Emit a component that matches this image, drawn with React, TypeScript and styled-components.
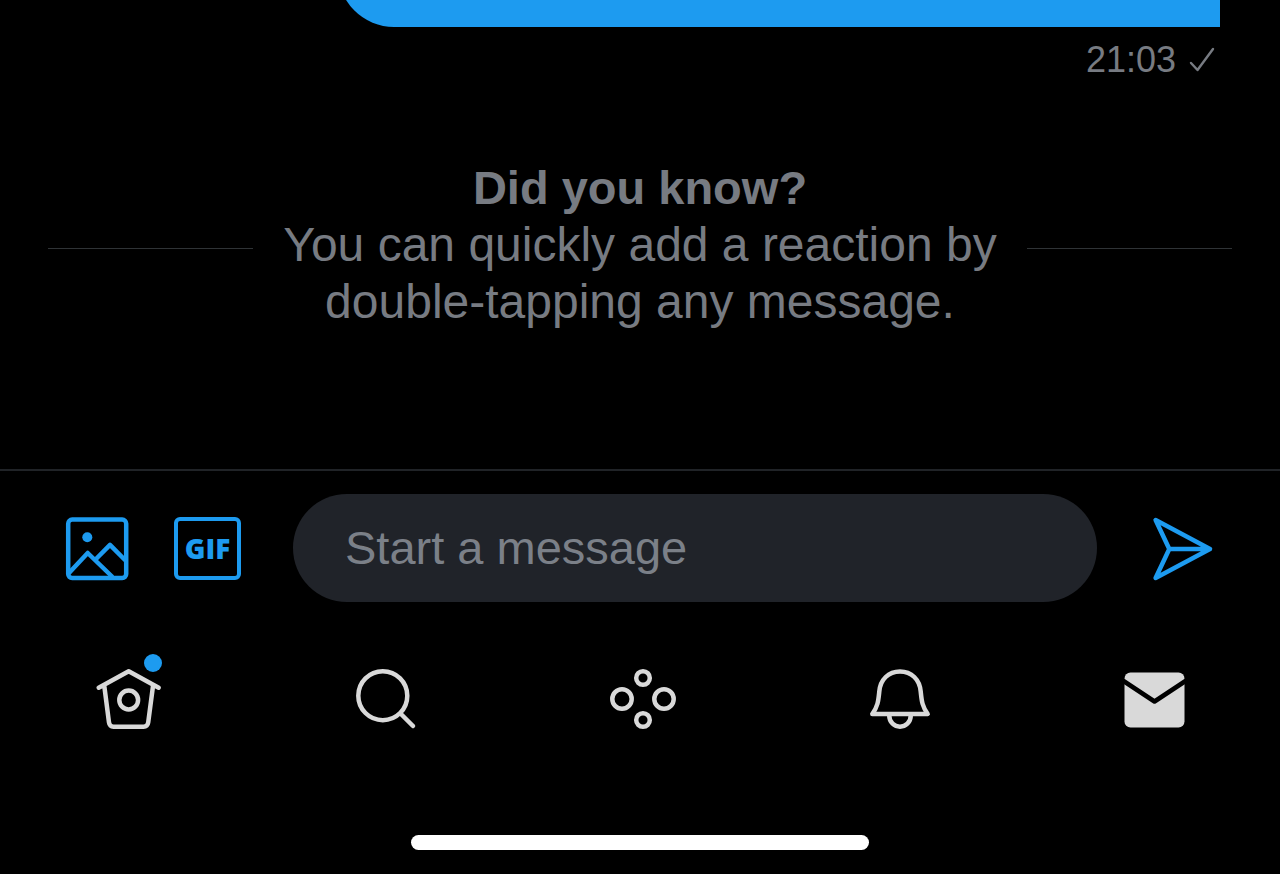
import React from 'react';
import styled, { createGlobalStyle } from 'styled-components';

const blue = '#1d9bf0';
const grey = '#777b82';
const line = '#2f3336';
const light = '#d9d9d9';

const GlobalStyle = createGlobalStyle`
  *, *::before, *::after { box-sizing: border-box; }
  body {
    margin: 0;
    background: #000;
    font-family: "Liberation Sans", Arial, sans-serif;
  }
  button { font: inherit; }
`;

const Screen = styled.div`
  display: flex;
  flex-direction: column;
  min-height: 100vh;
  background: #000;
`;

const Conversation = styled.main`
  display: flex;
  flex-direction: column;
  flex: 1;
  padding: 0 48px;
`;

const BubbleClip = styled.div`
  display: flex;
  align-items: flex-end;
  height: 27px;
  padding: 0 12px 0 290px;
  overflow: hidden;
`;

const Bubble = styled.div`
  flex: 1;
  height: 112px;
  border-radius: 56px 56px 0 56px;
  background: ${blue};
`;

const Meta = styled.div`
  display: flex;
  align-items: center;
  justify-content: flex-end;
  gap: 12px;
  margin-top: 11px;
  padding-right: 16px;
  color: ${grey};
  font-size: 36px;
  line-height: 44px;
`;

const Tip = styled.section`
  display: flex;
  align-items: center;
  gap: 30px;
  margin-top: 77px;
  color: ${grey};
  font-size: 48px;
  line-height: 57px;
  text-align: center;

  &::before, &::after {
    content: "";
    flex: 1;
    height: 1px;
    background: ${line};
  }
`;

const TipBody = styled.div`
  padding-bottom: 8px;
`;

const TipTitle = styled.h2`
  margin: 0;
  font-size: 47px;
  font-weight: 700;
`;

const TipText = styled.p`
  margin: 0;
`;

const Composer = styled.form`
  display: flex;
  align-items: center;
  padding: 23px 66px 24px 65px;
  border-top: 2px solid #202327;
`;

const Tools = styled.div`
  display: flex;
  align-items: center;
  gap: 45px;
  margin-right: 52px;
`;

const IconButton = styled.button`
  display: flex;
  flex: none;
  padding: 0;
  border: 0;
  background: none;
  color: ${blue};
  cursor: pointer;
`;

const GifButton = styled.button`
  display: flex;
  align-items: center;
  justify-content: center;
  flex: none;
  width: 67px;
  height: 63px;
  padding: 0;
  border: 4px solid ${blue};
  border-radius: 6px;
  background: none;
  color: ${blue};
  cursor: pointer;

  && {
    font: 800 28px/32px "Open Sans", sans-serif;
  }
`;

const MessageInput = styled.input`
  flex: 1;
  min-width: 0;
  height: 108px;
  margin-right: 53px;
  padding: 0 52px 2px;
  border: 0;
  border-radius: 54px;
  outline: 0;
  background: #202329;
  color: #e7e9ea;
  font: 47px/57px "Liberation Sans", Arial, sans-serif;

  &::placeholder {
    color: #7b8088;
    opacity: 1;
  }
`;

const TabBar = styled.nav`
  display: flex;
  justify-content: space-between;
  padding: 42px 92px 0 96px;
`;

const Tab = styled.a`
  position: relative;
  display: flex;
  color: ${light};
`;

const Dot = styled.span`
  position: absolute;
  top: -14px;
  right: 0;
  width: 18px;
  height: 18px;
  border-radius: 50%;
  background: ${blue};
`;

const HomeIndicator = styled.div`
  width: 458px;
  max-width: 60%;
  height: 15px;
  margin: 103px auto 24px;
  border-radius: 8px;
  background: #fff;
`;

type IconProps = { width?: number; height?: number; children: React.ReactNode };

const Icon = ({ width = 66, height = 64, children }: IconProps) => (
  <svg
    width={width}
    height={height}
    viewBox={`0 0 ${width} ${height}`}
    fill="none"
    stroke="currentColor"
    strokeWidth="4.5"
    strokeLinecap="round"
    strokeLinejoin="round"
    overflow="visible"
    aria-hidden="true"
  >
    {children}
  </svg>
);

export default function App() {
  return (
    <>
      <GlobalStyle />
      <Screen>
        <Conversation>
          <BubbleClip>
            <Bubble />
          </BubbleClip>
          <Meta>
            <time>21:03</time>
            <Icon width={28} height={28}>
              <path d="M3 17 L9.5 24 L25 3" strokeWidth="2.4" />
            </Icon>
          </Meta>
          <Tip>
            <TipBody>
              <TipTitle>Did you know?</TipTitle>
              <TipText>
                You can quickly add a reaction by
                <br />
                double-tapping any message.
              </TipText>
            </TipBody>
          </Tip>
        </Conversation>
        <Composer onSubmit={(e) => e.preventDefault()}>
          <Tools>
            <IconButton type="button" aria-label="Add photo">
              <Icon width={64}>
                <rect x="3.2" y="3.6" width="58" height="58.4" rx="4" />
                <circle cx="22.3" cy="21.3" r="5" fill="currentColor" stroke="none" />
                <path d="M4 57 L22.7 37 L47 60.5 M31 43 L45 28.8 L60 44" />
              </Icon>
            </IconButton>
            <GifButton type="button">GIF</GifButton>
          </Tools>
          <MessageInput type="text" aria-label="Message" placeholder="Start a message" />
          <IconButton type="submit" aria-label="Send">
            <Icon width={64}>
              <path d="M5.6 4 L60 33 L5.6 62 L19.3 33 Z M19.3 33 H60" />
            </Icon>
          </IconButton>
        </Composer>
        <TabBar>
          <Tab href="#home" aria-label="Home">
            <Icon>
              <path d="M2.7 19.7 L32.7 3.3 L62.7 19.7 M8.3 18 L13 54.5 Q13.6 58.7 17.5 58.7 H47.5 Q51.6 58.7 52.2 54.5 L57 18" />
              <circle cx="32.7" cy="32" r="9.4" />
            </Icon>
            <Dot />
          </Tab>
          <Tab href="#search" aria-label="Search">
            <Icon>
              <circle cx="29.8" cy="27.7" r="24.5" />
              <path d="M48 46 L60 58" />
            </Icon>
          </Tab>
          <Tab href="#spaces" aria-label="Spaces">
            <Icon>
              <circle cx="34" cy="10" r="6.8" />
              <circle cx="34" cy="52" r="6.8" />
              <circle cx="13" cy="31" r="9.7" />
              <circle cx="55" cy="31" r="9.7" />
            </Icon>
          </Tab>
          <Tab href="#notifications" aria-label="Notifications">
            <Icon>
              <path d="M6.3 46 C12 38 12.3 33 13.3 23.5 C14.3 11.5 22.5 3.5 34 3.5 C45.5 3.5 53.7 11.5 54.7 23.5 C55.7 33 56 38 61.7 46 Z" />
              <path d="M23.2 47 C23.2 62.5 44.8 62.5 44.8 47" />
            </Icon>
          </Tab>
          <Tab href="#messages" aria-label="Messages">
            <Icon>
              <rect x="2.5" y="4.5" width="60" height="55" rx="6" fill="currentColor" stroke="none" />
              <path d="M0 12 L32.5 33.5 L65 12" stroke="#000" />
            </Icon>
          </Tab>
        </TabBar>
        <HomeIndicator />
      </Screen>
    </>
  );
}
